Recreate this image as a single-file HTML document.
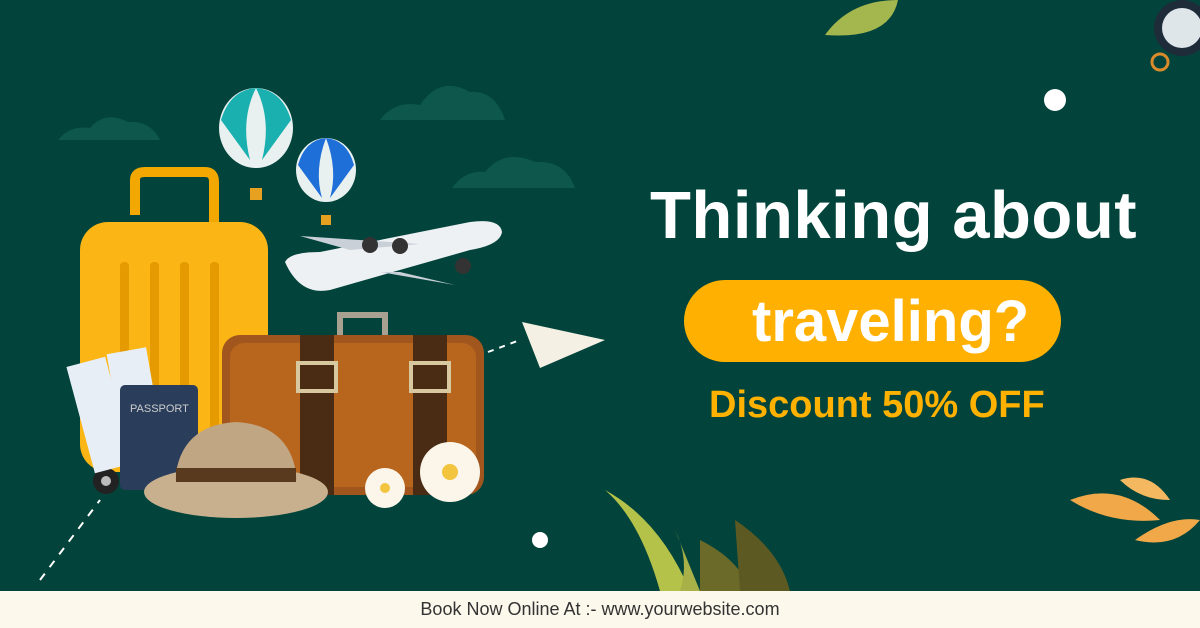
<!DOCTYPE html>
<html><head><meta charset="utf-8"><style>
body{margin:0;width:1200px;height:628px;overflow:hidden;background:#02443b;font-family:"Liberation Sans",sans-serif;position:relative}
.abs{position:absolute}
.t1{left:650px;top:177px;font-size:67px;font-weight:bold;color:#fff;letter-spacing:0.5px;white-space:nowrap}
.pill{left:684px;top:280px;width:377px;height:82px;border-radius:41px;background:#ffb000}
.t2{left:752px;top:288px;font-size:58px;font-weight:bold;color:#fff;white-space:nowrap}
.t3{left:709px;top:384px;font-size:38px;font-weight:bold;color:#ffb100;white-space:nowrap}
.foot{left:0;top:591px;width:1200px;height:37px;background:#fdf8ec;text-align:center;font-size:18px;line-height:36px;color:#333}
</style></head><body>
<svg class="abs" style="left:0;top:0" width="1200" height="591">
 <g fill="#0d574c">
  <path d="M58 140 Q70 125 90 128 Q105 110 128 122 Q150 120 160 140Z"/>
  <path d="M380 120 Q395 100 420 105 Q440 75 470 92 Q495 90 505 120Z"/>
  <path d="M452 188 Q465 170 485 172 Q505 148 535 162 Q565 160 575 188Z"/>
 </g>
 <circle cx="1055" cy="100" r="11" fill="#fff"/>
 <circle cx="540" cy="540" r="8" fill="#fff"/>
 <circle cx="1182" cy="28" r="28" fill="#1e2c3a"/><circle cx="1182" cy="28" r="20" fill="#dfe6ea"/>
 <circle cx="1160" cy="62" r="8" fill="none" stroke="#d98a2a" stroke-width="3"/>
 <path d="M825 35 Q850 0 898 0 Q890 40 825 35Z" fill="#a4b64e"/>
 <ellipse cx="256" cy="128" rx="37" ry="40" fill="#e8f0f0"/>
 <path d="M221 120 Q230 90 256 88 Q240 120 250 160Z" fill="#1ab0b0"/><path d="M291 120 Q282 90 256 88 Q272 120 262 160Z" fill="#1ab0b0"/>
 <rect x="250" y="188" width="12" height="12" fill="#e8a020"/>
 <ellipse cx="326" cy="170" rx="30" ry="32" fill="#e8f0f0"/>
 <path d="M298 165 Q305 140 326 138 Q314 170 322 198Z" fill="#1e6fd8"/><path d="M354 165 Q347 140 326 138 Q338 170 330 198Z" fill="#1e6fd8"/>
 <rect x="321" y="215" width="10" height="10" fill="#e8a020"/>
 <path d="M135 215 V180 Q135 172 145 172 H205 Q214 172 214 182 V225" fill="none" stroke="#f2a800" stroke-width="10"/>
 <rect x="80" y="222" width="188" height="250" rx="28" fill="#fbb514"/>
 <g fill="#e49a00"><rect x="120" y="262" width="9" height="190" rx="4"/><rect x="150" y="262" width="9" height="190" rx="4"/><rect x="180" y="262" width="9" height="190" rx="4"/><rect x="210" y="262" width="9" height="190" rx="4"/></g>
 <circle cx="106" cy="481" r="13" fill="#222"/><circle cx="106" cy="481" r="5" fill="#bbb"/>
 <path d="M285 262 Q290 252 320 252 L470 222 Q500 218 502 232 Q500 245 470 250 L330 290 Q300 296 285 262Z" fill="#eef1f4"/>
 <path d="M350 250 L300 236 L330 238 L420 244Z" fill="#c9d0d8"/>
 <path d="M380 272 L455 285 L400 272Z" fill="#c9d0d8"/>
 <circle cx="370" cy="245" r="8" fill="#333"/><circle cx="400" cy="246" r="8" fill="#333"/><circle cx="463" cy="266" r="8" fill="#333"/>
 <path d="M522 322 L605 340 L540 368Z" fill="#f4f0e4"/>
 <path d="M488 352 L520 340" stroke="#fff" stroke-width="2" stroke-dasharray="6 6"/>
 <path d="M40 580 L100 500" stroke="#fff" stroke-width="2" stroke-dasharray="8 8"/>
 <path d="M340 340 V315 H385 V340" fill="none" stroke="#a8a090" stroke-width="6"/>
 <rect x="222" y="335" width="262" height="160" rx="18" fill="#a0561c"/>
 <rect x="230" y="343" width="246" height="144" rx="14" fill="#b8651e"/>
 <rect x="300" y="335" width="34" height="160" fill="#4a2c14"/><rect x="413" y="335" width="34" height="160" fill="#4a2c14"/>
 <rect x="298" y="363" width="38" height="28" fill="none" stroke="#d8c8a0" stroke-width="4"/><rect x="411" y="363" width="38" height="28" fill="none" stroke="#d8c8a0" stroke-width="4"/>
 <rect x="80" y="360" width="40" height="110" fill="#e8eef6" transform="rotate(-15 100 415)"/>
 <rect x="115" y="350" width="40" height="100" fill="#e8eef6" transform="rotate(-10 135 400)"/>
 <rect x="120" y="385" width="78" height="105" rx="5" fill="#2a3e5c"/>
 <text x="130" y="412" font-size="11" fill="#ccc" font-family="Liberation Sans">PASSPORT</text>
 <ellipse cx="236" cy="492" rx="92" ry="26" fill="#c8b08e"/>
 <path d="M175 480 Q180 425 236 422 Q292 425 297 480Z" fill="#c0a682"/>
 <rect x="176" y="468" width="120" height="14" fill="#5a3a1e"/>
 <circle cx="450" cy="472" r="30" fill="#fcf6ea"/><circle cx="450" cy="472" r="8" fill="#f3c43e"/>
 <circle cx="385" cy="488" r="20" fill="#fcf6ea"/><circle cx="385" cy="488" r="5" fill="#f3c43e"/>
 <path d="M605 490 Q640 520 660 591 L690 591 Q660 520 605 490Z" fill="#b5c24a"/>
 <path d="M700 540 Q740 560 750 591 L700 591Z" fill="#6b6a28"/>
 <path d="M735 520 Q780 550 790 591 L740 591Z" fill="#5c5a22"/>
 <path d="M675 530 Q690 560 680 591 L700 591Z" fill="#a8b048"/>
 <path d="M1070 500 Q1120 480 1160 520 Q1110 525 1070 500Z" fill="#f0a848"/>
 <path d="M1120 480 Q1150 470 1170 500 Q1140 500 1120 480Z" fill="#f4b860"/>
 <path d="M1135 540 Q1170 515 1200 520 Q1175 550 1135 540Z" fill="#f0a848"/>
</svg>
<div class="abs t1">Thinking about</div>
<div class="abs pill"></div>
<div class="abs t2">traveling?</div>
<div class="abs t3">Discount 50% OFF</div>
<div class="abs foot">Book Now Online At :- www.yourwebsite.com</div>
</body></html>
